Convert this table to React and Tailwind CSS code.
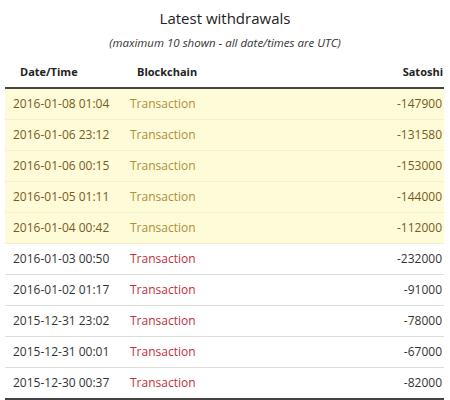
import React from 'react';

const rows = [
    { date: '2016-01-08 01:04', amount: '-147900', warn: true },
    { date: '2016-01-06 23:12', amount: '-131580', warn: true },
    { date: '2016-01-06 00:15', amount: '-153000', warn: true },
    { date: '2016-01-05 01:11', amount: '-144000', warn: true },
    { date: '2016-01-04 00:42', amount: '-112000', warn: true },
    { date: '2016-01-03 00:50', amount: '-232000' },
    { date: '2016-01-02 01:17', amount: '-91000' },
    { date: '2015-12-31 23:02', amount: '-78000' },
    { date: '2015-12-31 00:01', amount: '-67000' },
    { date: '2015-12-30 00:37', amount: '-82000' },
];

const App = () => {
    return (
        <div className="w-[450px] h-[400px] bg-white overflow-hidden font-['Open_Sans',sans-serif] text-[#333]">
            <h2 className="text-center text-[15px] pt-[6px] leading-[24px] text-[#222]">Latest withdrawals</h2>
            <p className="text-center text-[11.5px] italic mt-[5px] leading-[16px] text-[#333]">(maximum 10 shown - all date/times are UTC)</p>
            <div className="ml-[5px] w-[439px] mt-[6px]">
                <div className="grid grid-cols-[117px_1fr_auto] h-[32px] items-center border-b-2 border-[#444] text-[11px] font-bold text-[#222]">
                    <div className="pl-[15px]">Date/Time</div>
                    <div className="pl-[15px]">Blockchain</div>
                    <div className="pr-[1px] text-right">Satoshi</div>
                </div>
                {rows.map((r) => (
                    <div
                        key={r.date}
                        className={`grid grid-cols-[117px_1fr_auto] h-[31px] items-center text-[12px] border-b ${r.warn ? 'bg-[#fefbd9] border-[#f6f0c8] text-[#7a5a1a]' : 'bg-white border-[#ddd] text-[#333]'}`}
                    >
                        <div className="pl-[8px]">{r.date}</div>
                        <div className={`pl-[8px] ${r.warn ? 'text-[#b08d3c]' : 'text-[#c0303a]'}`}>Transaction</div>
                        <div className="pr-[2px] text-right">{r.amount}</div>
                    </div>
                ))}
                <div className="border-t-2 border-[#444] -mt-px"></div>
            </div>
        </div>
    );
};

export default App;
